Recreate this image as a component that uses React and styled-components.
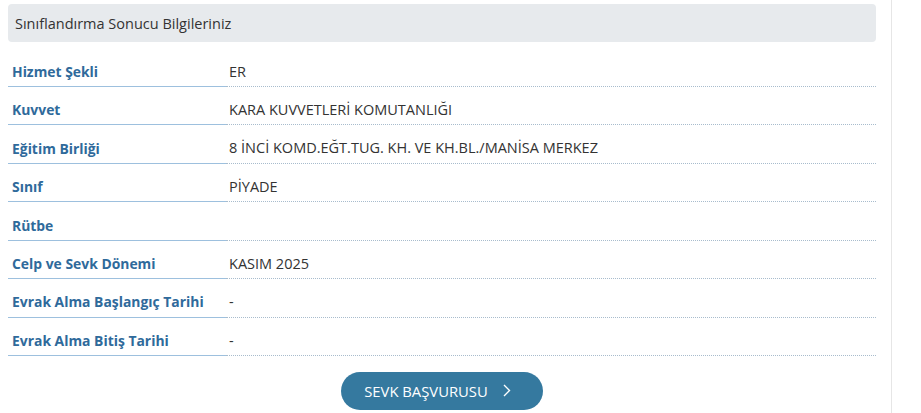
import React from "react";
import styled, { createGlobalStyle } from "styled-components";

const Global = createGlobalStyle`
  html, body { margin: 0; padding: 0; background: #fff; }
  body { font-family: "Open Sans", "Noto Sans", sans-serif; }
`;

const Page = styled.div`
  width: 892px;
  height: 413px;
  box-sizing: border-box;
  padding: 4px 15px 0 8px;
  border-right: 1px solid #e6e6e6;
`;

const Header = styled.div`
  height: 38px;
  background: #e7eaed;
  border-radius: 4px;
  display: flex;
  align-items: center;
  padding-left: 7px;
  font-size: 14.5px;
  color: #333;
`;

const Table = styled.div`
  margin-top: 6.6px;
  display: grid;
  grid-template-columns: 218px 1fr;
`;

const Cell = styled.div`
  height: 37.43px;
  box-sizing: content-box;
  display: flex;
  align-items: center;
  line-height: 1;
  span { position: relative; top: 4.5px; }
`;

const Label = styled(Cell)`
  border-bottom: 1px solid #9dc0de;
  padding-left: 4px;
  font-size: 13.9px;
  font-weight: 700;
  color: #2f6a9b;
`;

const Value = styled(Cell)`
  border-bottom: 1px dotted #a8bccd;
  padding-left: 3px;
  font-size: 14.5px;
  color: #333;
`;

const Actions = styled.div`
  display: flex;
  justify-content: center;
  margin-top: 16px;
`;

const Button = styled.button`
  width: 202px;
  height: 38px;
  border: none;
  border-radius: 19px;
  background: #35799f;
  color: #fff;
  font-family: inherit;
  font-size: 14.8px;
  display: flex;
  align-items: center;
  justify-content: center;
  gap: 15px;
  cursor: pointer;
  padding: 0 9px 0 0;
`;

const rows = [
  ["Hizmet Şekli", "ER"],
  ["Kuvvet", "KARA KUVVETLERİ KOMUTANLIĞI"],
  ["Eğitim Birliği", "8 İNCİ KOMD.EĞT.TUG. KH. VE KH.BL./MANİSA MERKEZ"],
  ["Sınıf", "PİYADE"],
  ["Rütbe", ""],
  ["Celp ve Sevk Dönemi", "KASIM 2025"],
  ["Evrak Alma Başlangıç Tarihi", "-"],
  ["Evrak Alma Bitiş Tarihi", "-"],
];

export default function App() {
  return (
    <>
      <Global />
      <Page>
        <Header>Sınıflandırma Sonucu Bilgileriniz</Header>
        <Table>
          {rows.map(([l, v]) => (
            <React.Fragment key={l}>
              <Label><span>{l}</span></Label>
              <Value><span>{v}</span></Value>
            </React.Fragment>
          ))}
        </Table>
        <Actions>
          <Button>
            SEVK BAŞVURUSU
            <svg width="8" height="13" viewBox="0 0 8 13" fill="none">
              <path d="M1 1l5.5 5.5L1 12" stroke="#fff" strokeWidth="1.4" />
            </svg>
          </Button>
        </Actions>
      </Page>
    </>
  );
}
